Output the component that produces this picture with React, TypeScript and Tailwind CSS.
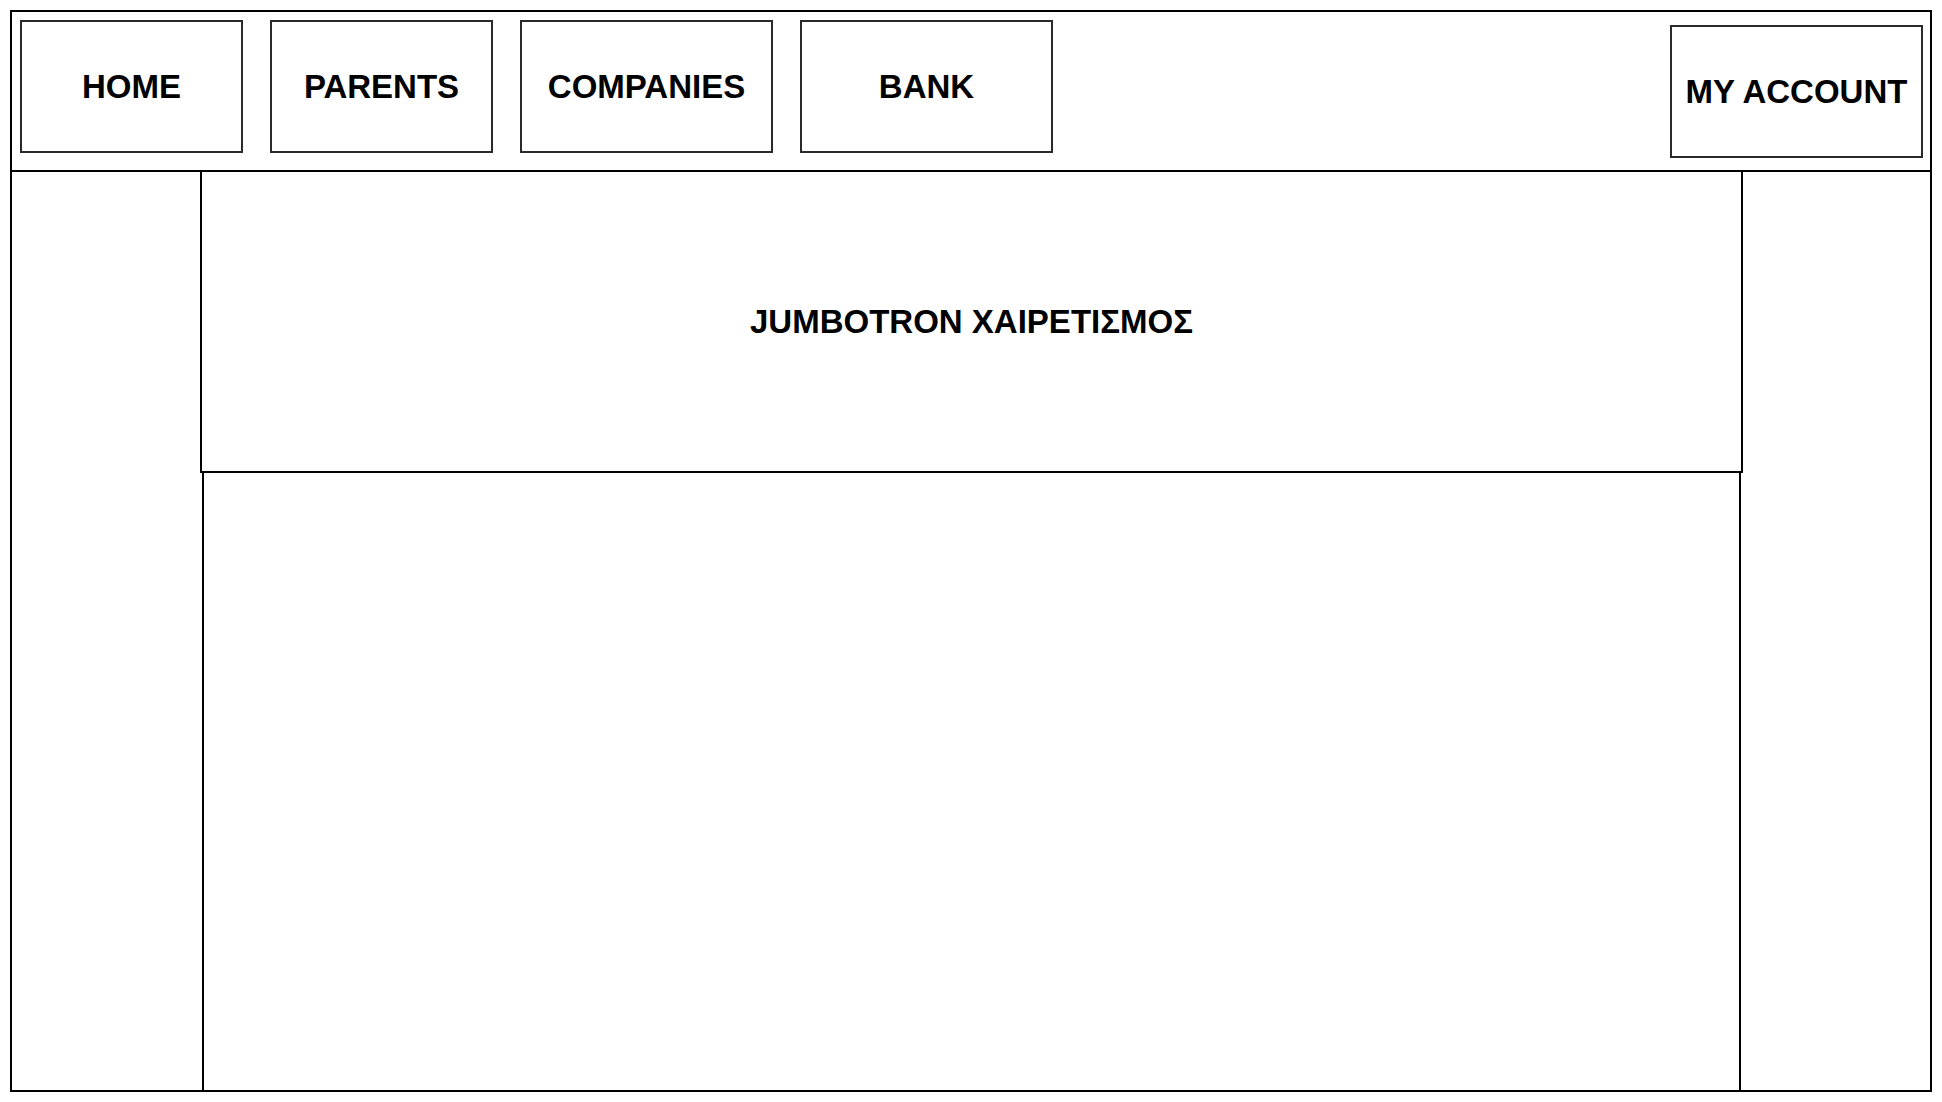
import React from 'react';

const NavBox = ({ label, className }: { label: string; className: string }) => {
  return (
    <div
      className={`flex items-center justify-center border-2 border-[#2a2a2a] text-[33px] font-bold text-black ${className}`}
    >
      {label}
    </div>
  );
};

const App = () => {
  return (
    <div className="w-[1942px] h-[1102px] bg-white font-['Liberation_Sans',Arial,sans-serif]">
      <div className="ml-[10px] mt-[10px] w-[1922px] h-[1082px] border-2 border-black flex flex-col">
        {/* header */}
        <div className="h-[160px] shrink-0 border-b-2 border-black flex items-start">
          <NavBox label="HOME" className="ml-[8px] mt-[8px] w-[223px] h-[133px]" />
          <NavBox label="PARENTS" className="ml-[27px] mt-[8px] w-[223px] h-[133px]" />
          <NavBox label="COMPANIES" className="ml-[27px] mt-[8px] w-[253px] h-[133px]" />
          <NavBox label="BANK" className="ml-[27px] mt-[8px] w-[253px] h-[133px]" />
          <NavBox label="MY ACCOUNT" className="ml-auto mr-[7px] mt-[13px] w-[253px] h-[133px]" />
        </div>

        {/* content */}
        <div className="flex-1 flex flex-col">
          <div className="ml-[188px] w-[1543px] h-[301px] shrink-0 border-x-2 border-b-2 border-black flex items-center justify-center">
            <span className="text-[33px] font-bold text-black">JUMBOTRON ΧΑΙΡΕΤΙΣΜΟΣ</span>
          </div>
          <div className="ml-[190px] w-[1539px] flex-1 border-x-2 border-black" />
        </div>
      </div>
    </div>
  );
};

export default App;
